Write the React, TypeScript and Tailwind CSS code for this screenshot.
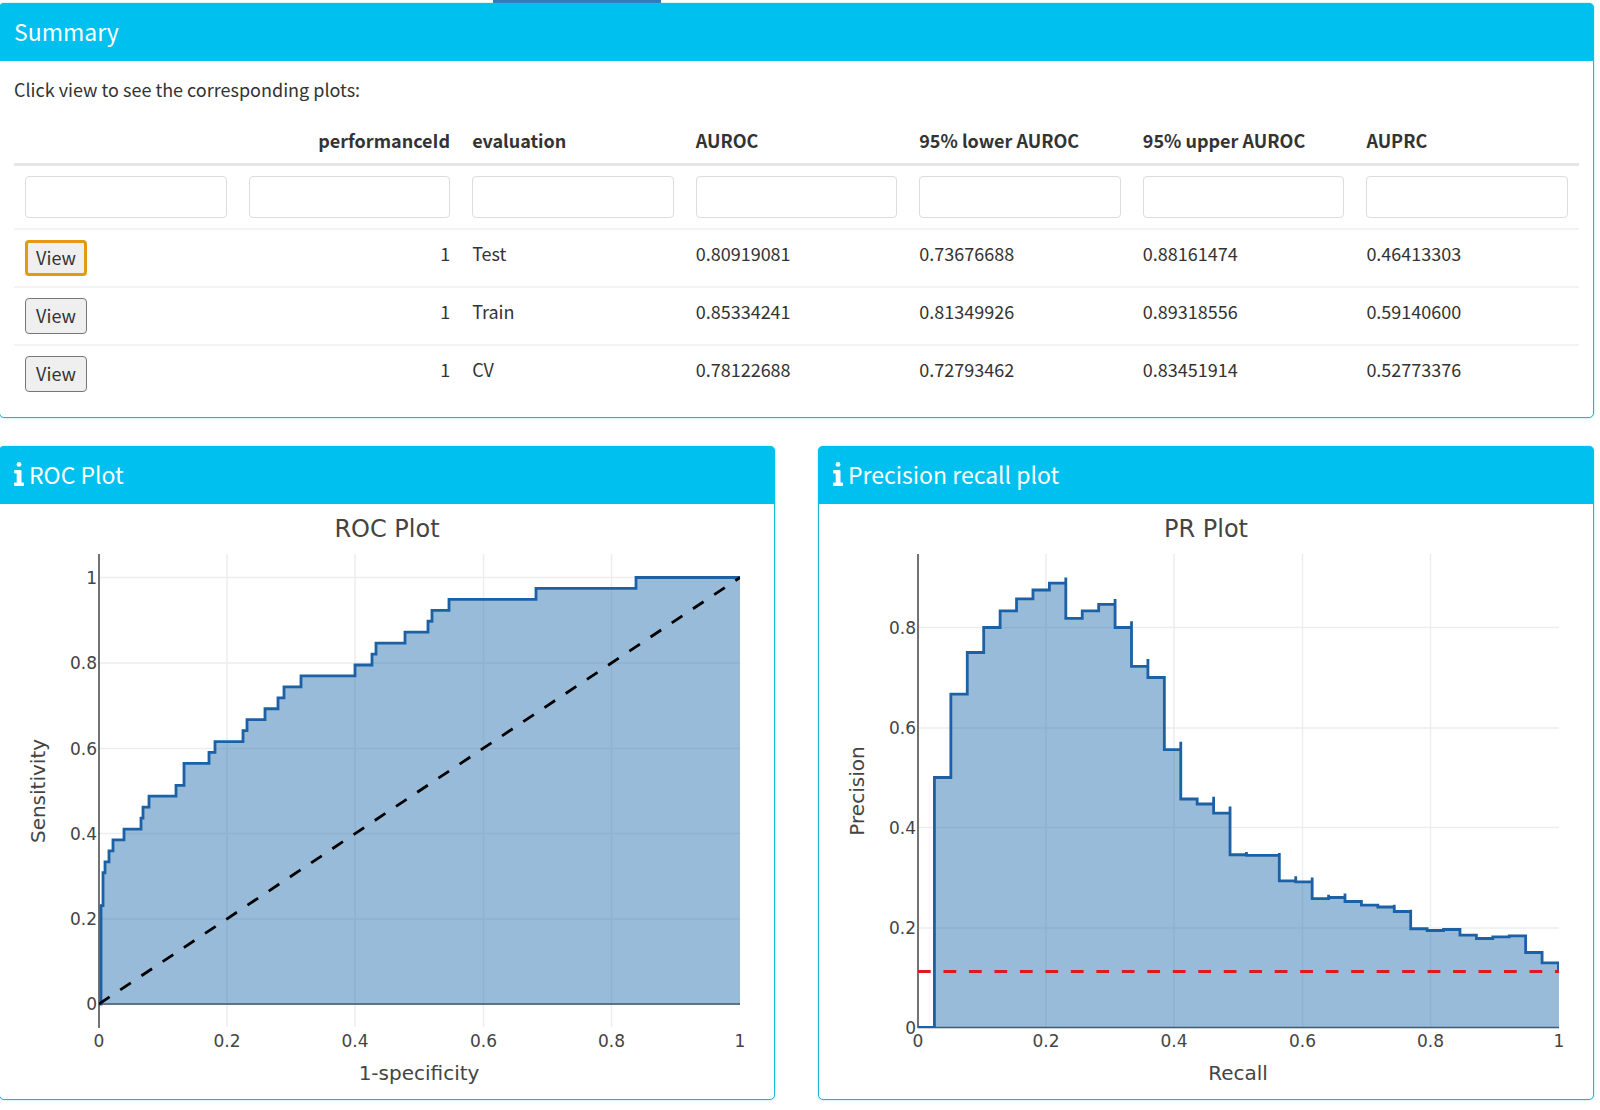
import type { ReactNode } from "react";

const columns = ["", "performanceId", "evaluation", "AUROC", "95% lower AUROC", "95% upper AUROC", "AUPRC"];

const rows = [
  { id: 1, evaluation: "Test", values: ["0.80919081", "0.73676688", "0.88161474", "0.46413303"], active: true },
  { id: 1, evaluation: "Train", values: ["0.85334241", "0.81349926", "0.89318556", "0.59140600"], active: false },
  { id: 1, evaluation: "CV", values: ["0.78122688", "0.72793462", "0.83451914", "0.52773376"], active: false },
];

const POSITIVES = 39;

// [x position where the step rises, number of true positives after it]
const rocSteps: [number, number][] = [
  [101, 9], [103, 12], [105, 13], [109, 14], [113, 15], [124, 16], [141, 17], [143, 18], [149, 19], [176, 20],
  [184, 22], [209, 23], [215, 24], [243, 25], [247, 26], [265, 27], [278, 28], [284, 29], [301, 30], [355, 31],
  [372, 32], [376, 33], [405, 34], [428, 35], [432, 36], [449, 37], [536, 38], [636, 39],
];

// Precision held between recall k/39 and (k+1)/39
const prLevels = [
  0, 0.5, 0.6667, 0.75, 0.8, 0.8333, 0.8571, 0.875, 0.8889, 0.8182, 0.8333, 0.8462, 0.8, 0.7222, 0.7, 0.5556,
  0.457, 0.447, 0.4286, 0.3455, 0.3443, 0.3443, 0.2933, 0.2911, 0.2577, 0.26, 0.252, 0.2449, 0.241, 0.232,
  0.1975, 0.194, 0.196, 0.1848, 0.178, 0.1813, 0.1834, 0.15, 0.1294,
];

// Local maxima reached before precision drops at recall k/39
const prPeaks: Record<number, number> = {
  9: 0.9, 12: 0.8571, 13: 0.8125, 14: 0.7368, 16: 0.5714, 18: 0.4615, 19: 0.442, 20: 0.351, 22: 0.349,
  23: 0.3026, 24: 0.3, 25: 0.2653, 26: 0.268, 27: 0.255, 29: 0.2454, 30: 0.2353, 31: 0.2007,
};

function rocPath() {
  let d = "M99 499";
  for (const [x, tp] of rocSteps) d += `H${x}V${499 - (tp / POSITIVES) * 426.5}`;
  return d + "H740";
}

function prPath() {
  const y = (p: number) => 522.5 - p * 500;
  let d = "M99 522.5";
  prLevels.forEach((level, k) => {
    const x = 99 + (k / POSITIVES) * 640.5;
    if (prPeaks[k]) d += `V${y(prPeaks[k])}`;
    d += `V${y(level)}H${x + 640.5 / POSITIVES}`;
  });
  return d + `V${y(0.112)}`;
}

type ChartProps = {
  id: string;
  title: string;
  xTitle: string;
  yTitle: string;
  yTicks: { y: number; label: string }[];
  baseline: number;
  line: string;
  children: ReactNode;
};

const xTicks = [
  { x: 99, label: "0" },
  { x: 227, label: "0.2" },
  { x: 355, label: "0.4" },
  { x: 483.5, label: "0.6" },
  { x: 611.5, label: "0.8" },
  { x: 740, label: "1" },
];

function Chart({ id, title, xTitle, yTitle, yTicks, baseline, line, children }: ChartProps) {
  return (
    <svg
      viewBox="0 0 774 594"
      role="img"
      aria-label={title}
      className="block w-full font-['Verdana','DejaVu_Sans',sans-serif]"
      fill="#444"
    >
      <clipPath id={id}>
        <rect x="99" y="49" width="641" height="474" />
      </clipPath>
      <g stroke="#ededed" strokeWidth="1.5">
        {xTicks.slice(1, 5).map((t) => (
          <path key={t.label} d={`M${t.x} 49V522`} />
        ))}
        {yTicks.slice(1).map((t) => (
          <path key={t.label} d={`M99 ${t.y}H740`} />
        ))}
      </g>
      <path d={`M99 ${baseline}H740`} stroke="#444" strokeWidth="1.5" />
      <path d="M99 49V523" stroke="#444" strokeWidth="1.5" />
      <g clipPath={`url(#${id})`} fill="none">
        <path d={`${line}H740V${baseline + 0.5}H99Z`} fill="rgb(47,119,179)" fillOpacity="0.5" />
        <path d={line} stroke="#1c61a5" strokeWidth="2.8" />
        {children}
      </g>
      <text x="387" y="32" textAnchor="middle" fontSize="24">{title}</text>
      <g fontSize="17">
        {xTicks.map((t) => (
          <text key={t.label} x={t.x} y="542" textAnchor="middle">{t.label}</text>
        ))}
        {yTicks.map((t) => (
          <text key={t.label} x="97" y={t.y + 6} textAnchor="end">{t.label}</text>
        ))}
      </g>
      <g fontSize="20" textAnchor="middle">
        <text x="419" y="575">{xTitle}</text>
        <text transform="translate(45 286) rotate(-90)">{yTitle}</text>
      </g>
    </svg>
  );
}

function InfoIcon() {
  return (
    <svg viewBox="0 0 10 24" className="mr-[5px] h-6 w-2.5 shrink-0" fill="currentColor" aria-hidden="true">
      <circle cx="5" cy="2.4" r="2.4" />
      <path d="M1 8h5.6a.9.9 0 0 1 .9.9V20.600h1.600a.9.9 0 0 1 .9.9v1.600a.9.9 0 0 1-.9.9H.9a.9.9 0 0 1-.9-.9v-1.600a.9.9 0 0 1 .9-.9h1.800V11.400H1a.9.9 0 0 1-.9-.9V8.900A.9.9 0 0 1 1 8z" />
    </svg>
  );
}

function Panel({ title, icon, children }: { title: string; icon?: boolean; children: ReactNode }) {
  return (
    <section className="min-w-0 rounded-[5px] border border-[#1fb5d8] bg-white shadow-[0_0_2px_rgba(0,192,239,0.5)]">
      <h3 className="-mx-px -mt-px flex h-[58px] items-center rounded-t-[5px] bg-[#00c0ef] px-[15px] pb-0.5 text-[23px] leading-none font-normal text-white">
        {icon && <InfoIcon />}
        {title}
      </h3>
      {children}
    </section>
  );
}

export default function App() {
  return (
    <main className="-ml-px overflow-hidden bg-white pr-1.5 font-['Noto_Sans_CJK_SC',sans-serif] text-lg text-[#333]">
      <div className="ml-[494px] h-[3px] w-[168px] bg-[#337ab7]" />
      <Panel title="Summary">
        <div className="px-3.5 pt-3.5 pb-3.5">
          <p className="leading-7">Click view to see the corresponding plots:</p>
          <table className="mt-[21px] w-full table-fixed border-collapse">
            <thead>
              <tr className="border-b-[3px] border-[#e6e6e6]">
                {columns.map((c, i) => (
                  <th
                    key={i}
                    scope="col"
                    className={`h-10 px-[11px] pb-[7px] leading-7 font-bold ${i === 1 ? "text-right" : "text-left"}`}
                  >
                    {c}
                  </th>
                ))}
              </tr>
              <tr>
                {columns.map((c, i) => (
                  <td key={i} className="h-[65px] px-[11px] align-middle">
                    <input
                      type="text"
                      aria-label={`Filter ${c || "actions"}`}
                      className="block h-[42px] w-full rounded border border-[#dcdcdc] bg-white px-2"
                    />
                  </td>
                ))}
              </tr>
            </thead>
            <tbody>
              {rows.map((r) => (
                <tr key={r.evaluation} className="h-[58px] border-t-2 border-[#f3f3f3] align-top">
                  <td className="px-[11px] pt-2.5">
                    <button
                      type="button"
                      className={`block h-9 w-[62px] rounded bg-[#efefef] pb-0.5 text-center leading-none ${
                        r.active ? "border-3 border-[#e29a12]" : "border border-[#767676]"
                      }`}
                    >
                      View
                    </button>
                  </td>
                  <td className="px-[11px] pt-[9px] text-right leading-7">{r.id}</td>
                  <td className="px-[11px] pt-[9px] leading-7">{r.evaluation}</td>
                  {r.values.map((v) => (
                    <td key={v} className="px-[11px] pt-[9px] leading-7">{v}</td>
                  ))}
                </tr>
              ))}
            </tbody>
          </table>
        </div>
      </Panel>
      <div className="mt-7 mb-2.5 grid grid-cols-2 gap-[43px]">
        <Panel title="ROC Plot" icon>
          <div className="pt-px">
            <Chart
              id="roc-area"
              title="ROC Plot"
              xTitle="1-specificity"
              yTitle="Sensitivity"
              baseline={499}
              line={rocPath()}
              yTicks={[
                { y: 499, label: "0" },
                { y: 414, label: "0.2" },
                { y: 328.5, label: "0.4" },
                { y: 243.5, label: "0.6" },
                { y: 158, label: "0.8" },
                { y: 72.5, label: "1" },
              ]}
            >
              <path d="M99 499L740 72.5" stroke="#000" strokeWidth="2.8" strokeDasharray="12.74 12.74" />
            </Chart>
          </div>
        </Panel>
        <Panel title="Precision recall plot" icon>
          <div className="pt-px">
            <Chart
              id="pr-area"
              title="PR Plot"
              xTitle="Recall"
              yTitle="Precision"
              baseline={522.5}
              line={prPath()}
              yTicks={[
                { y: 522.5, label: "0" },
                { y: 423, label: "0.2" },
                { y: 322.5, label: "0.4" },
                { y: 223, label: "0.6" },
                { y: 122.5, label: "0.8" },
              ]}
            >
              <path d="M99 466.500H740" stroke="#dd1a1f" strokeWidth="2.8" strokeDasharray="12.74 12.74" />
            </Chart>
          </div>
        </Panel>
      </div>
    </main>
  );
}
